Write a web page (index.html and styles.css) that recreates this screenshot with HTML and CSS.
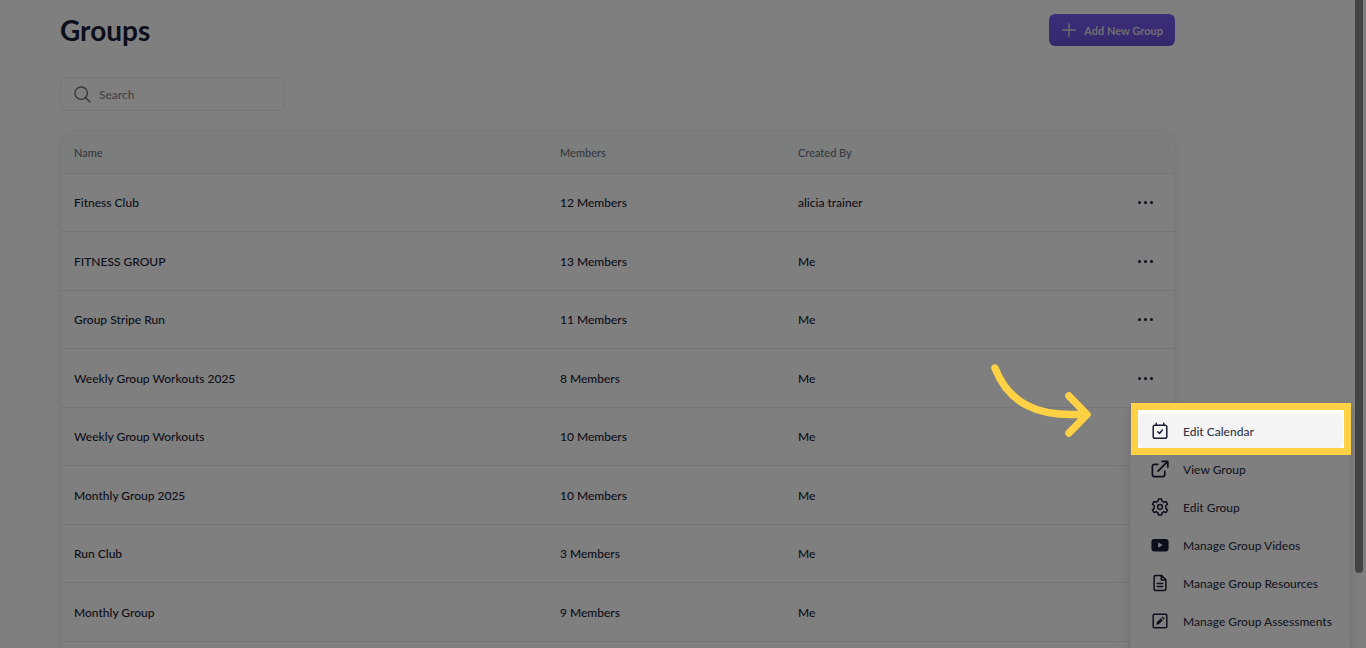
FILE: index.html
```html
<!DOCTYPE html>
<html lang="en">
<head>
<meta charset="utf-8">
<title>Groups</title>
<link rel="stylesheet" href="styles.css">
</head>
<body>
<main class="page">
  <header class="page-header">
    <h1 class="title">Groups</h1>
    <button class="add-button" type="button">
      <svg width="14" height="14" viewBox="0 0 14 14" fill="none" stroke="currentColor" stroke-width="1.3" stroke-linecap="round" aria-hidden="true"><path d="M7 .7v12.6M.7 7h12.6"/></svg>
      <span>Add New Group</span>
    </button>
  </header>

  <div class="search">
    <svg width="17" height="17" viewBox="0 0 18 18" fill="none" stroke="currentColor" stroke-width="1.5" stroke-linecap="round" aria-hidden="true"><circle cx="7.6" cy="7.6" r="6.6"/><path d="M12.4 12.4l4.6 4.6"/></svg>
    <input class="search-input" type="text" placeholder="Search" aria-label="Search">
  </div>

  <table class="groups">
    <colgroup><col class="col-name"><col class="col-members"><col class="col-owner"><col class="col-actions"></colgroup>
    <thead>
      <tr><th>Name</th><th>Members</th><th>Created By</th><th></th></tr>
    </thead>
    <tbody>
      <tr><td>Fitness Club</td><td>12 Members</td><td>alicia trainer</td>
        <td><div class="actions"><button class="more" type="button" aria-label="Actions"><i></i><i></i><i></i></button></div></td></tr>
      <tr><td>FITNESS GROUP</td><td>13 Members</td><td>Me</td>
        <td><div class="actions"><button class="more" type="button" aria-label="Actions"><i></i><i></i><i></i></button></div></td></tr>
      <tr><td>Group Stripe Run</td><td>11 Members</td><td>Me</td>
        <td><div class="actions"><button class="more" type="button" aria-label="Actions"><i></i><i></i><i></i></button></div></td></tr>
      <tr><td>Weekly Group Workouts 2025</td><td>8 Members</td><td>Me</td>
        <td><div class="actions"><button class="more" type="button" aria-label="Actions"><i></i><i></i><i></i></button>
          <div class="menu">
            <div class="menu-slot">
              <button class="menu-item active" type="button">
                <svg width="18" height="18" viewBox="0 0 18 18" fill="none" stroke="currentColor" stroke-width="1.5" stroke-linecap="round" stroke-linejoin="round" aria-hidden="true"><rect x="2.2" y="3.2" width="13.6" height="13" rx="1.8"/><path d="M5.2 1.2v2M12.8 1.2v2M6.8 9.8l1.7 1.7 2.8-3.4"/></svg>
                <span>Edit Calendar</span>
              </button>
              <span class="spotlight"></span>
              <svg class="arrow" width="106" height="80" viewBox="0 0 106 80" fill="none" stroke="#ffd145" stroke-width="7.5" stroke-linecap="round" stroke-linejoin="round" aria-hidden="true"><path d="M7 7C20 41 48 57 98 53M81 35L99 53.5L81 72"/></svg>
            </div>
            <button class="menu-item" type="button">
              <svg width="18" height="18" viewBox="0 0 18 18" fill="none" stroke="currentColor" stroke-width="1.7" stroke-linecap="round" stroke-linejoin="round" aria-hidden="true"><path d="M6.8 4.3H3.6A2.2 2.2 0 0 0 1.4 6.500V14.500a2.200 2.200 0 0 0 2.200 2.200H11.600a2.200 2.200 0 0 0 2.200-2.200V11.300M11.200 1.400H16.800V7M16.500 1.700L7 11.200"/></svg>
              <span>View Group</span>
            </button>
            <button class="menu-item" type="button">
              <svg width="18" height="18" viewBox="0 0 18 18" fill="none" stroke="currentColor" stroke-width="1.5" stroke-linejoin="round" aria-hidden="true"><path d="M7.500 1h3l.6 2.300 1.500.9 2.400-.7 1.500 2.600-1.700 1.700v2.400l1.700 1.700-1.500 2.600-2.400-.7-1.500.9-.6 2.300h-3l-.6-2.300-1.500-.9-2.400.7-1.500-2.600 1.700-1.700V7.800L1.500 6.100 3 3.500l2.400.7 1.500-.9z"/><circle cx="9" cy="9" r="2.400"/></svg>
              <span>Edit Group</span>
            </button>
            <button class="menu-item" type="button">
              <svg width="18" height="18" viewBox="0 0 18 18" aria-hidden="true"><rect x=".4" y="3" width="17.200" height="12.400" rx="3" fill="currentColor"/><path d="M7.200 6.500v5.200l4.500-2.600z" fill="#fff"/></svg>
              <span>Manage Group Videos</span>
            </button>
            <button class="menu-item" type="button">
              <svg width="18" height="18" viewBox="0 0 18 18" fill="none" stroke="currentColor" stroke-width="1.500" stroke-linecap="round" stroke-linejoin="round" aria-hidden="true"><path d="M10.500 1.400H4.800A1.700 1.700 0 0 0 3.100 3.100v11.800a1.700 1.700 0 0 0 1.700 1.700h8.400a1.700 1.700 0 0 0 1.700-1.700V5.800zM10.300 1.600V6h4.400M6.300 9.600h5.400M6.300 12.600h5.400"/></svg>
              <span>Manage Group Resources</span>
            </button>
            <button class="menu-item" type="button">
              <svg width="18" height="18" viewBox="0 0 18 18" fill="none" stroke="currentColor" stroke-width="1.500" stroke-linejoin="round" aria-hidden="true"><rect x="2.200" y="2.200" width="13.600" height="13.600" rx="1.200"/><path d="M5.300 12.700l.5-2.500 4-4 2 2-4 4zM10.600 5.400l1-1 2 2-1 1z" fill="currentColor" stroke="none"/></svg>
              <span>Manage Group Assessments</span>
            </button>
          </div>
        </div></td></tr>
      <tr><td>Weekly Group Workouts</td><td>10 Members</td><td>Me</td><td></td></tr>
      <tr><td>Monthly Group 2025</td><td>10 Members</td><td>Me</td><td></td></tr>
      <tr><td>Run Club</td><td>3 Members</td><td>Me</td><td></td></tr>
      <tr><td>Monthly Group</td><td>9 Members</td><td>Me</td><td></td></tr>
      <tr><td></td><td></td><td></td><td></td></tr>
    </tbody>
  </table>
</main>
<div class="scrollbar"></div>
</body>
</html>
```
FILE: styles.css
```css
* { box-sizing: border-box; }

body {
  position: relative;
  height: 100vh;
  margin: 0;
  overflow: hidden;
  background: #fff;
  color: #1b1d36;
  font-family: Lato, "Open Sans", sans-serif;
  font-size: 12px;
  font-weight: 500;
}

button, input { font: inherit; color: inherit; }
svg { flex: none; }

.page { padding: 14px 191px 0 60px; }

.page-header {
  display: flex;
  align-items: center;
  justify-content: space-between;
}

.title {
  margin: 0;
  font-size: 28px;
  line-height: 32px;
  font-weight: 700;
}

.add-button {
  display: flex;
  align-items: center;
  gap: 8px;
  height: 32px;
  padding: 0 12px 0 13px;
  border: 0;
  border-radius: 6px;
  background: linear-gradient(#7a5df6, #674fd8);
  color: #dcdce4;
  font-size: 11px;
  font-weight: 700;
}

.search {
  display: flex;
  align-items: center;
  gap: 8px;
  width: 225px;
  height: 34px;
  margin: 31px 0 19px;
  padding: 0 13px;
  border: 1px solid #ececf0;
  border-radius: 6px;
  color: #71727f;
}

.search-input {
  flex: 1;
  min-width: 0;
  padding: 0;
  border: 0;
  outline: 0;
  background: transparent;
}

.search-input::placeholder { color: #85868f; opacity: 1; }

.groups {
  width: 100%;
  table-layout: fixed;
  border-collapse: separate;
  border-spacing: 0;
  border: 1px solid #f0f1f3;
  border-radius: 16px 16px 0 0;
  box-shadow: 0 2px 10px rgba(30, 40, 60, 0.06);
}

.col-name { width: 486px; }
.col-members { width: 238px; }
.col-actions { width: 54px; }

.groups th, .groups td {
  padding: 0 13px;
  border-bottom: 1px solid #e8eaec;
  text-align: left;
}

.groups th {
  height: 43px;
  background: #f6fcf9;
  color: #6f7280;
  font-size: 11px;
  font-weight: 500;
}

.groups th:first-child { border-top-left-radius: 16px; }
.groups th:last-child { border-top-right-radius: 16px; }

.groups td { height: 59px; }
.groups tr:nth-child(odd) td { height: 58px; }

.actions { position: relative; width: 24px; height: 24px; }

.more {
  display: flex;
  align-items: center;
  justify-content: center;
  gap: 3px;
  width: 24px;
  height: 24px;
  padding: 0;
  border: 0;
  background: none;
}

.more i {
  width: 3px;
  height: 3px;
  border-radius: 50%;
  background: currentColor;
}

.menu {
  position: absolute;
  z-index: 5;
  top: 40px;
  left: -4px;
  display: flex;
  flex-direction: column;
  gap: 4px;
  width: 222px;
  padding: 7px 7px 16px 8px;
  border: 1px solid #e6e6ea;
  border-radius: 8px;
  background: #fff;
  box-shadow: 0 2px 12px rgba(20, 20, 40, 0.12);
}

.menu-slot { position: relative; }

.menu-item {
  display: flex;
  align-items: center;
  gap: 14px;
  width: 100%;
  height: 34px;
  padding: 0 13px;
  border: 0;
  border-radius: 6px;
  background: none;
  color: #1b1d36;
  white-space: nowrap;
}

.menu-item span { color: #33354a; }
.menu-item.active { background: #f4f4f4; }

.spotlight {
  position: absolute;
  z-index: 10;
  inset: -11px -8px -7px -7px;
  border: 7px solid #ffd145;
  box-shadow: 0 0 0 2000px rgba(0, 0, 0, 0.5);
  pointer-events: none;
}

.arrow {
  position: absolute;
  z-index: 11;
  top: -53px;
  right: 249px;
}

.scrollbar {
  position: absolute;
  top: -8px;
  right: 3px;
  width: 8px;
  height: 581px;
  border-radius: 4px;
  background: #888;
}
```
